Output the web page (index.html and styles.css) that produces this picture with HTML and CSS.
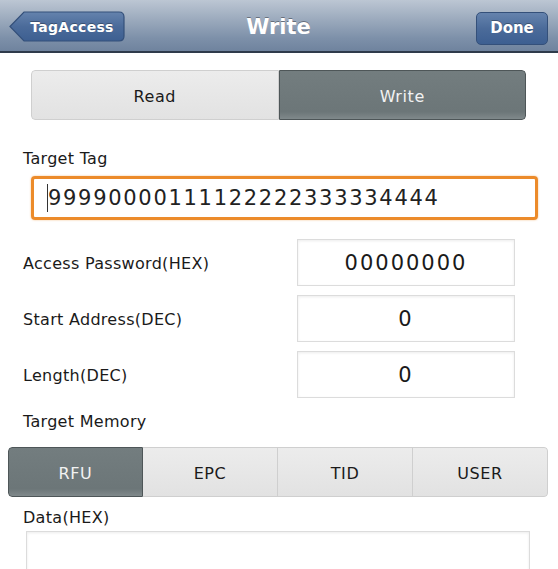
FILE: index.html
```html
<!DOCTYPE html>
<html>
<head>
<meta charset="utf-8">
<link rel="stylesheet" href="styles.css">
</head>
<body>
<div class="page">
  <header class="navbar">
    <div class="nav-left">
      <div class="back-btn">
        <svg class="back-shape" width="116" height="31" viewBox="0 0 116 31">
          <defs>
            <linearGradient id="bg1" x1="0" y1="0" x2="0" y2="1">
              <stop offset="0" stop-color="#6583ad"/>
              <stop offset="0.5" stop-color="#4b6b9a"/>
              <stop offset="1" stop-color="#3d5f91"/>
            </linearGradient>
          </defs>
          <path d="M1 15.5 L15 1 H110 Q115 1 115 6 V25 Q115 30 110 30 H15 Z" fill="url(#bg1)" stroke="#34507a" stroke-width="1.2"/>
        </svg>
        <span class="btn-text">TagAccess</span>
      </div>
    </div>
    <div class="nav-title">Write</div>
    <div class="nav-right">
      <div class="done-btn">Done</div>
    </div>
  </header>

  <div class="seg2">
    <div class="seg-item light">Read</div>
    <div class="seg-item dark">Write</div>
  </div>

  <div class="label tag-label">Target Tag</div>
  <div class="tag-input"><span class="caret"></span><span class="tag-value">99990000111122222333334444</span></div>

  <div class="rows">
    <div class="row">
      <div class="row-label">Access Password(HEX)</div>
      <div class="row-box">00000000</div>
    </div>
    <div class="row">
      <div class="row-label">Start Address(DEC)</div>
      <div class="row-box">0</div>
    </div>
    <div class="row">
      <div class="row-label">Length(DEC)</div>
      <div class="row-box">0</div>
    </div>
  </div>

  <div class="label mem-label">Target Memory</div>
  <div class="seg4">
    <div class="seg-item dark">RFU</div>
    <div class="seg-item light">EPC</div>
    <div class="seg-item light">TID</div>
    <div class="seg-item light">USER</div>
  </div>

  <div class="label data-label">Data(HEX)</div>
  <div class="data-box"></div>
</div>
</body>
</html>
```

FILE: styles.css
```css
html, body {
  margin: 0;
  padding: 0;
  background: #ffffff;
}
.page {
  width: 558px;
  height: 569px;
  overflow: hidden;
  font-family: "DejaVu Sans", "Noto Sans", sans-serif;
  color: #1a1a1a;
}
.navbar {
  height: 51px;
  border-bottom: 2px solid #2f3b4b;
  background: linear-gradient(#bcc6d3 0%, #9aa9bc 40%, #7d90a9 75%, #6f839e 100%);
  display: grid;
  grid-template-columns: 1fr auto 1fr;
  align-items: center;
  padding: 0 10px 0 9px;
}
.nav-left { display: flex; justify-content: flex-start; }
.nav-right { display: flex; justify-content: flex-end; }
.back-btn {
  position: relative;
  width: 116px;
  height: 31px;
  display: flex;
  align-items: center;
  justify-content: center;
  margin-top: 2px;
}
.back-shape {
  position: absolute;
  left: 0;
  top: 0;
}
.btn-text {
  position: relative;
  color: #ffffff;
  font-size: 14px;
  font-weight: bold;
  padding-left: 10px;
  letter-spacing: 0.3px;
  text-shadow: 0 -1px 0 rgba(0,0,0,0.3);
}
.nav-title {
  color: #ffffff;
  font-size: 21px;
  font-weight: bold;
  text-shadow: 0 -1px 0 rgba(0,0,0,0.35);
  margin-top: 2px;
}
.done-btn {
  width: 70px;
  height: 31px;
  margin-top: 5px;
  border: 1px solid #34507a;
  border-radius: 5px;
  background: linear-gradient(#6583ad 0%, #4b6b9a 50%, #3d5f91 100%);
  color: #ffffff;
  font-size: 15px;
  font-weight: bold;
  display: flex;
  align-items: center;
  justify-content: center;
  text-shadow: 0 -1px 0 rgba(0,0,0,0.3);
}
.seg2 {
  margin: 17px 0 0 31px;
  width: 495px;
  height: 50px;
  display: grid;
  grid-template-columns: 1fr 1fr;
  border-radius: 4px;
  overflow: hidden;
}
.seg-item {
  display: flex;
  align-items: center;
  justify-content: center;
  font-size: 16px;
  letter-spacing: 0.6px;
  padding-top: 2px;
}
.seg-item.light {
  background: linear-gradient(#ececec, #e2e2e2);
  border: 1px solid #cfcfcf;
  color: #1a1a1a;
}
.seg-item.dark {
  background: linear-gradient(#737d7f 0%, #6c7678 85%, #80898b 100%);
  border: 1px solid #4e5658;
  color: #f2f2f2;
}
.seg2 .light { border-radius: 4px 0 0 4px; }
.seg2 .dark { border-radius: 0 4px 4px 0; }
.label {
  font-size: 16px;
  letter-spacing: 0.3px;
  margin-left: 23px;
}
.tag-label {
  margin-top: 29px;
  line-height: 20px;
}
.tag-input {
  margin: 7px 0 0 31px;
  width: 488px;
  height: 38px;
  border: 3px solid #ec8b2a;
  border-radius: 4px;
  box-shadow: 0 0 2px rgba(236,139,42,0.6);
  display: flex;
  align-items: center;
  padding-left: 13px;
  box-sizing: content-box;
}
.caret {
  width: 1px;
  height: 28px;
  background: #333;
}
.tag-value {
  font-size: 21px;
  letter-spacing: 1.7px;
  color: #222;
}
.rows {
  margin-top: 19px;
  display: flex;
  flex-direction: column;
  gap: 9px;
}
.row {
  display: flex;
  align-items: center;
  height: 47px;
}
.row-label {
  width: 274px;
  padding-left: 23px;
  font-size: 16px;
  letter-spacing: 0.3px;
  padding-top: 2px;
}
.row-box {
  width: 216px;
  height: 45px;
  border: 1px solid #dcdcdc;
  box-shadow: inset 0 1px 3px rgba(0,0,0,0.08);
  display: flex;
  align-items: center;
  justify-content: center;
  font-size: 21px;
  letter-spacing: 2px;
  color: #1a1a1a;
}
.mem-label {
  margin-top: 14px;
  line-height: 20px;
}
.seg4 {
  margin: 15px 0 0 8px;
  width: 540px;
  height: 50px;
  display: grid;
  grid-template-columns: repeat(4, 1fr);
  border-radius: 4px;
  overflow: hidden;
}
.seg4 .dark { border-radius: 4px 0 0 4px; }
.seg4 .light { border-left: none; }
.seg4 .light:last-child { border-radius: 0 4px 4px 0; }
.data-label {
  margin-top: 11px;
  line-height: 20px;
}
.data-box {
  margin: 3px 0 0 26px;
  width: 502px;
  height: 60px;
  border: 1px solid #dcdcdc;
  box-shadow: inset 0 1px 3px rgba(0,0,0,0.08);
}
```
